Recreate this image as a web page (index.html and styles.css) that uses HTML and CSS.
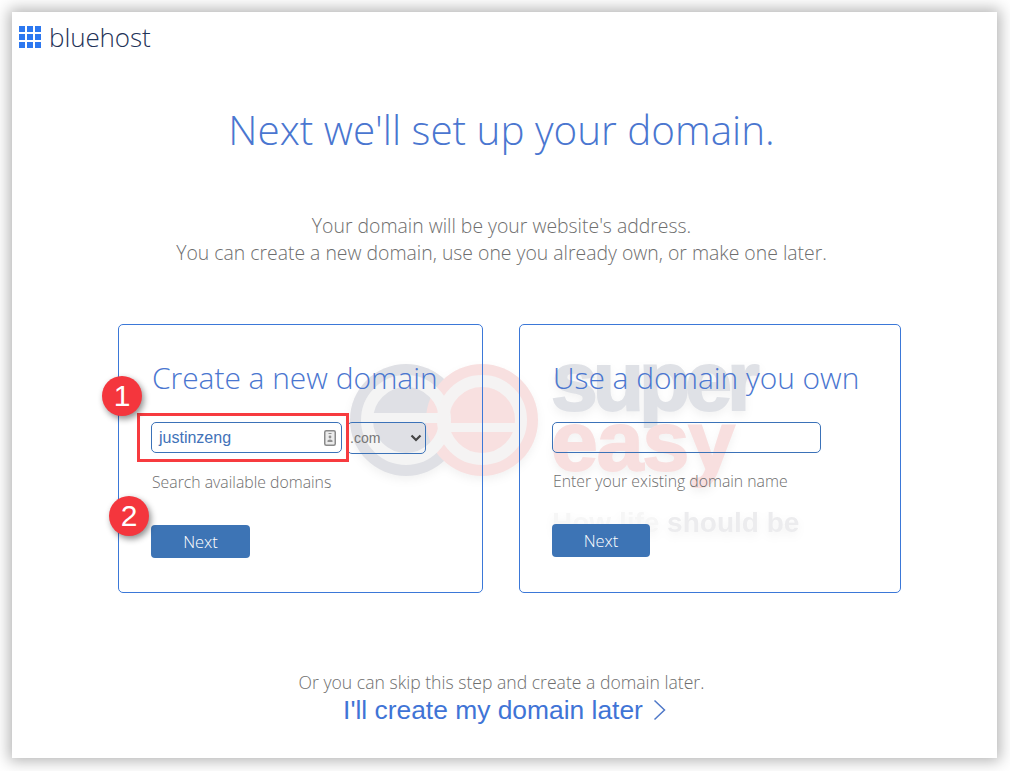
FILE: index.html
```html
<!DOCTYPE html>
<html lang="en">
<head>
  <meta charset="UTF-8">
  <meta name="viewport" content="width=device-width, initial-scale=1.0">
  <title>Next we'll set up your domain</title>
  <link rel="stylesheet" href="styles.css">
</head>
<body>
  <div class="frame">
    <!-- watermark sits behind the page text -->
    <div class="watermark">
      <svg class="wm-rings" width="200" height="124" viewBox="0 0 200 124">
        <circle cx="62" cy="62" r="56" fill="#dfe0e5"/>
        <circle cx="138" cy="62" r="56" fill="#f8e0e0"/>
        <circle cx="62" cy="62" r="39" fill="none" stroke="#f4f4f4" stroke-width="12"/>
        <rect x="20" y="55" width="78" height="10" fill="#f4f4f4"/>
        <circle cx="138" cy="62" r="39" fill="none" stroke="#f5f3f3" stroke-width="12"/>
        <rect x="100" y="65" width="78" height="9" fill="#f5f3f3"/>
      </svg>
      <span class="wm-word wm-super">super</span>
      <span class="wm-word wm-easy">easy</span>
      <span class="wm-tag"><span class="wm-tag-pale">How life</span> should be</span>
    </div>

    <header class="logo">
      <svg class="logo-grid" width="22" height="22" viewBox="0 0 22 22">
        <rect x="0" y="0" width="6" height="6"/><rect x="8" y="0" width="6" height="6"/><rect x="16" y="0" width="6" height="6"/>
        <rect x="0" y="8" width="6" height="6"/><rect x="8" y="8" width="6" height="6"/><rect x="16" y="8" width="6" height="6"/>
        <rect x="0" y="16" width="6" height="6"/><rect x="8" y="16" width="6" height="6"/><rect x="16" y="16" width="6" height="6"/>
      </svg>
      <span class="logo-text">bluehost</span>
    </header>

    <h1 class="title">Next we'll set up your domain.</h1>
    <p class="intro">Your domain will be your website's address.<br>You can create a new domain, use one you already own, or make one later.</p>

    <div class="cards">
      <section class="card card-new">
        <h2 class="card-title">Create a new domain</h2>
        <div class="field-row">
          <div class="text-input">
            <span>justinzeng</span>
            <svg class="contact-icon" width="12" height="16" viewBox="0 0 12 16">
              <rect x="0.75" y="0.75" width="10.5" height="14.5" rx="1.5" fill="#ececec" stroke="#8a8a8a" stroke-width="1.5"/>
              <rect x="4.5" y="3" width="3" height="1" fill="#909090"/>
              <circle cx="6" cy="7" r="1.4" fill="#909090"/>
              <path d="M3.5 12 V10.5 Q6 8.5 8.5 10.5 V12 Z" fill="#909090"/>
            </svg>
          </div>
          <div class="tld-select">
            <span>.com</span>
            <svg width="12" height="8" viewBox="0 0 12 8"><path d="M1.5 1.5 L6 6 L10.5 1.5" fill="none" stroke="#444" stroke-width="2.2"/></svg>
          </div>
        </div>
        <p class="hint">Search available domains</p>
        <button class="next-btn">Next</button>
      </section>

      <section class="card card-own">
        <h2 class="card-title">Use a domain you own</h2>
        <div class="field-row">
          <div class="text-input text-input-wide"></div>
        </div>
        <p class="hint">Enter your existing domain name</p>
        <button class="next-btn next-btn-own">Next</button>
      </section>
    </div>

    <footer class="skip">
      <p class="skip-text">Or you can skip this step and create a domain later.</p>
      <a class="skip-link" href="#">I'll create my domain later
        <svg width="13" height="22" viewBox="0 0 13 22"><path d="M1.5 1.5 L11.5 11 L1.5 20.5" fill="none" stroke="#4f78c8" stroke-width="1.5"/></svg>
      </a>
    </footer>

    <!-- annotations -->
    <div class="red-box"></div>
    <div class="badge badge-one">1</div>
    <div class="badge badge-two">2</div>
  </div>
</body>
</html>
```

FILE: styles.css
```css
* {
  margin: 0;
  padding: 0;
  box-sizing: border-box;
}

body {
  font-family: 'Open Sans', sans-serif;
  background-color: #ffffff;
  height: 771px;
  overflow: hidden;
  padding: 12px 13px 13px 12px;
}

.frame {
  position: relative;
  z-index: 0;
  height: 746px;
  background: #ffffff;
  box-shadow: 0 0 14px 3px rgba(0, 0, 0, 0.3);
  text-align: center;
}

.logo {
  display: flex;
  align-items: center;
  gap: 8px;
  padding-left: 7px;
  height: 50px;
}

.logo-grid {
  fill: #2d78f0;
  flex-shrink: 0;
}

.logo-text {
  font-weight: 300;
  font-size: 26px;
  line-height: 26px;
  letter-spacing: -0.1px;
  color: #1f3358;
}

.title {
  font-weight: 300;
  font-size: 40.4px;
  line-height: 54px;
  color: #4a76d0;
  margin-top: 41px;
  padding-right: 6px;
}

.intro {
  font-weight: 300;
  font-size: 19.4px;
  line-height: 27px;
  color: #6e6e6e;
  margin-top: 55px;
  padding-right: 6px;
}

.cards {
  display: flex;
  gap: 36px;
  margin-top: 58px;
  padding-left: 106px;
  text-align: left;
}

.card {
  height: 269px;
  border: 1px solid #3b78d8;
  border-radius: 5px;
  padding: 33px 0 0 32px;
}

.card-new {
  width: 365px;
}

.card-own {
  width: 382px;
}

.card-title {
  font-weight: 300;
  font-size: 29.9px;
  line-height: 40px;
  color: #4a76d0;
  padding-left: 1px;
}

.field-row {
  display: flex;
  gap: 5px;
  margin-top: 24px;
}

.text-input {
  display: flex;
  align-items: center;
  justify-content: space-between;
  width: 191px;
  height: 31px;
  border: 1px solid #3b72b8;
  border-radius: 5px;
  padding: 0 5px 0 7px;
  background: #ffffff;
  font-family: 'Liberation Sans', sans-serif;
  font-size: 16px;
  color: #4272b8;
}

.text-input-wide {
  width: 269px;
  background: transparent;
}

.tld-select {
  display: flex;
  align-items: center;
  justify-content: space-between;
  width: 79px;
  height: 32px;
  border: 1px solid #3b72b8;
  border-radius: 5px;
  padding: 0 3px 0 2px;
  font-family: 'Liberation Sans', sans-serif;
  font-size: 14px;
  color: #777777;
}

.hint {
  font-weight: 300;
  font-size: 15.8px;
  line-height: 22px;
  color: #6e6e6e;
  margin-top: 17px;
  padding-left: 1px;
}

.next-btn {
  display: block;
  width: 99px;
  height: 33px;
  margin-top: 32px;
  border: none;
  border-radius: 4px;
  background: #3d74b5;
  color: #ffffff;
  font-family: 'Open Sans', sans-serif;
  font-weight: 300;
  font-size: 16.5px;
}

.next-btn-own {
  width: 98px;
}

.skip {
  margin-top: 77px;
  padding-right: 6px;
}

.skip-text {
  font-weight: 300;
  font-size: 17.6px;
  line-height: 24px;
  color: #6e6e6e;
}

.skip-link {
  display: inline-flex;
  align-items: center;
  gap: 10px;
  margin-top: 1px;
  padding-left: 6px;
  font-family: 'Liberation Sans', sans-serif;
  font-size: 26.4px;
  line-height: 30px;
  color: #3f74d6;
  text-decoration: none;
}

/* Watermark */
.watermark {
  position: absolute;
  z-index: -1;
  left: 332px;
  top: 346px;
  width: 470px;
  height: 200px;
  filter: drop-shadow(0 4px 4px rgba(0, 0, 0, 0.05));
}

.wm-rings {
  position: absolute;
  left: 0;
  top: 0;
}

.wm-word {
  position: absolute;
  left: 207px;
  font-family: 'Liberation Sans', sans-serif;
  font-weight: 700;
  font-size: 84px;
  line-height: 76px;
  -webkit-text-stroke: 2px currentColor;
}

.wm-super {
  top: -15px;
  letter-spacing: -5px;
  color: #dfe1e6;
}

.wm-easy {
  top: 45px;
  letter-spacing: -1px;
  color: #f8dfdf;
}

.wm-tag {
  position: absolute;
  left: 208px;
  top: 149px;
  font-family: 'Liberation Sans', sans-serif;
  font-weight: 700;
  font-size: 28px;
  line-height: 32px;
  color: #ececee;
  white-space: nowrap;
}

.wm-tag-pale {
  color: #f6f6f6;
}

/* Annotations */
.red-box {
  position: absolute;
  left: 125px;
  top: 401px;
  width: 212px;
  height: 49px;
  border: 3px solid #f73b3f;
}

.badge {
  position: absolute;
  width: 40px;
  height: 40px;
  border-radius: 50%;
  background: #f4363d;
  color: #ffffff;
  font-family: 'Liberation Sans', sans-serif;
  font-size: 30px;
  line-height: 40px;
  text-align: center;
  box-shadow: 2px 3px 6px rgba(0, 0, 0, 0.45);
}

.badge-one {
  left: 90px;
  top: 364px;
}

.badge-two {
  left: 97px;
  top: 484px;
}
```
